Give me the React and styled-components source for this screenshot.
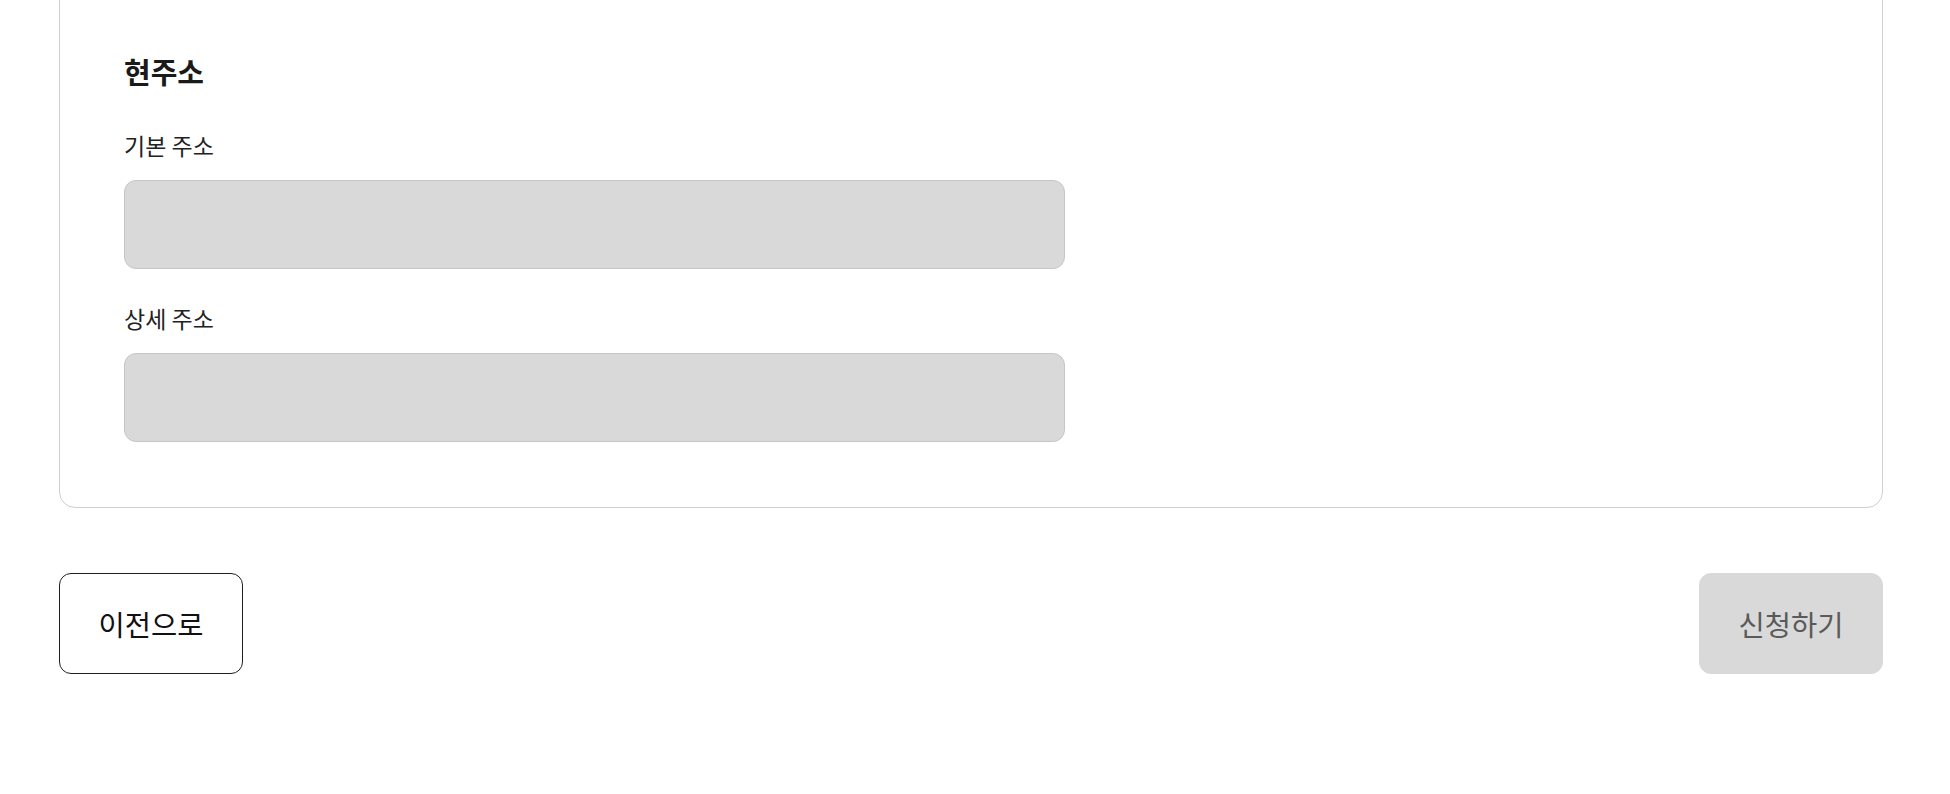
import styled, { createGlobalStyle } from 'styled-components'

const GlobalStyle = createGlobalStyle`
    *{box-sizing:border-box;}
    body{
        margin:0;
        background:#fff;
        font-family:"Noto Sans CJK KR", "Noto Sans", sans-serif;
        color:#1a1a1a;
        overflow:hidden;
    }
`

const Page = styled.main`
    padding:0 67px 0 59px;
    display:flex;
    flex-direction:column;
    gap:65px;
`

const Card = styled.section`
    margin-top:-40px;
    border:1px solid #cfcfcf;
    border-radius:16px;
    padding:91px 64px 65px 64px;
    display:flex;
    flex-direction:column;
`

const Title = styled.h2`
    margin:0 0 39px;
    font-size:29px;
    line-height:39px;
    font-weight:700;
    color:#1a1a1a;
`

const Field = styled.div`
    display:flex;
    flex-direction:column;
    gap:19px;
    width:941px;

    & + &{
        margin-top:34px;
    }
`

const Label = styled.label`
    font-size:23px;
    line-height:31px;
    color:#222;
`

const Input = styled.input`
    height:89px;
    width:100%;
    border:1px solid #c6c6c6;
    border-radius:12px;
    background:#d9d9d9;
    padding:0 24px;
    font:inherit;
    font-size:21px;
    outline:none;
`

const Actions = styled.div`
    display:flex;
    justify-content:space-between;
    align-items:center;
`

const Button = styled.button`
    height:101px;
    padding:0 38.5px;
    border-radius:12px;
    font-family:inherit;
    font-size:28.5px;
    cursor:pointer;
    border:1px solid ${({primary}) => primary ? "#d9d9d9" : "#1f1f1f"};
    background:${({primary}) => primary ? "#d9d9d9" : "#fff"};
    color:${({primary}) => primary ? "#5a5a5a" : "#111"};
`

const App = () => {
    return (
        <>
            <GlobalStyle />
            <Page>
                <Card>
                    <Title>현주소</Title>
                    <Field>
                        <Label>기본 주소</Label>
                        <Input readOnly />
                    </Field>
                    <Field>
                        <Label>상세 주소</Label>
                        <Input />
                    </Field>
                </Card>
                <Actions>
                    <Button>이전으로</Button>
                    <Button primary disabled>신청하기</Button>
                </Actions>
            </Page>
        </>
    )
}

export default App
